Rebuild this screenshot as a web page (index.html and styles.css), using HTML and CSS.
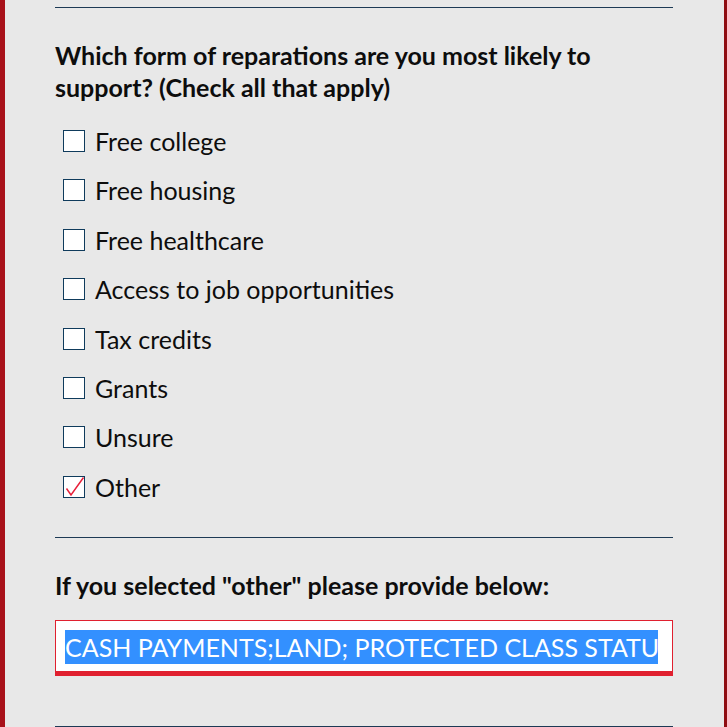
FILE: index.html
```html
<!DOCTYPE html>
<html lang="en">
<head>
    <meta charset="UTF-8">
    <title>Reparations Survey</title>
    <meta name="viewport" content="width=device-width, initial-scale=1.0">
    <link rel="stylesheet" href="styles.css">
</head>
<body>
    <div class="survey">
        <hr class="rule">

        <h2 class="question">Which form of reparations are you most likely to support? (Check all that apply)</h2>
        <ul class="options">
            <li class="option"><span class="box"></span>Free college</li>
            <li class="option"><span class="box"></span>Free housing</li>
            <li class="option"><span class="box"></span>Free healthcare</li>
            <li class="option"><span class="box"></span>Access to job opportunities</li>
            <li class="option"><span class="box"></span>Tax credits</li>
            <li class="option"><span class="box"></span>Grants</li>
            <li class="option"><span class="box"></span>Unsure</li>
            <li class="option"><span class="box checked">
                <svg width="22" height="22" viewBox="0 0 22 22"><path d="M3.5 12.5 L8 19 L20.5 1.5" fill="none" stroke="#e8203a" stroke-width="1.5" stroke-linejoin="miter"/></svg>
            </span>Other</li>
        </ul>

        <hr class="rule">

        <h2 class="question">If you selected "other" please provide below:</h2>
        <div class="field">
            <div class="field-text">CASH PAYMENTS;LAND; PROTECTED CLASS STATUS</div>
        </div>

        <hr class="rule bottom">
    </div>
</body>
</html>
```

FILE: styles.css
```css
body {
    margin: 0;
    height: 727px;
    overflow: hidden;
    background: #e8e8e8;
    border-left: 5px solid #a8111a;
    border-right: 3px solid #8e0c11;
    box-sizing: border-box;
    font-family: Lato, "Open Sans", sans-serif;
    color: #0d0d0d;
}

.survey {
    width: 618px;
    margin-left: 50px;
    padding-top: 7px;
}

.rule {
    margin: 0;
    border: none;
    border-top: 1px solid #1d3a55;
}

.question {
    font-size: 25px;
    font-weight: 700;
    line-height: 32px;
    margin: 31px 0 0 0;
}

.options {
    list-style: none;
    margin: 23px 0 35px 0;
    padding: 0 0 0 8px;
    display: flex;
    flex-direction: column;
    gap: 19.4px;
}

.option {
    display: flex;
    align-items: center;
    gap: 10px;
    font-size: 25px;
    line-height: 30px;
}

.box {
    width: 22px;
    height: 22px;
    box-sizing: border-box;
    background: #fff;
    border: 1px solid #0f3b5c;
    position: relative;
}

    .box svg {
        position: absolute;
        left: -1px;
        top: -1px;
    }

.field {
    margin-top: 19px;
    background: #fff;
    border: 1px solid #e0202f;
    border-bottom-width: 5px;
    padding: 9px 9px 7px 9px;
}

.field-text {
    font-size: 25px;
    line-height: 34px;
    white-space: nowrap;
    overflow: hidden;
    color: #fff;
    background: linear-gradient(to right, #3390ff calc(100% - 5px), #fff 0);
}

.rule.bottom {
    margin-top: 50px;
}
```
